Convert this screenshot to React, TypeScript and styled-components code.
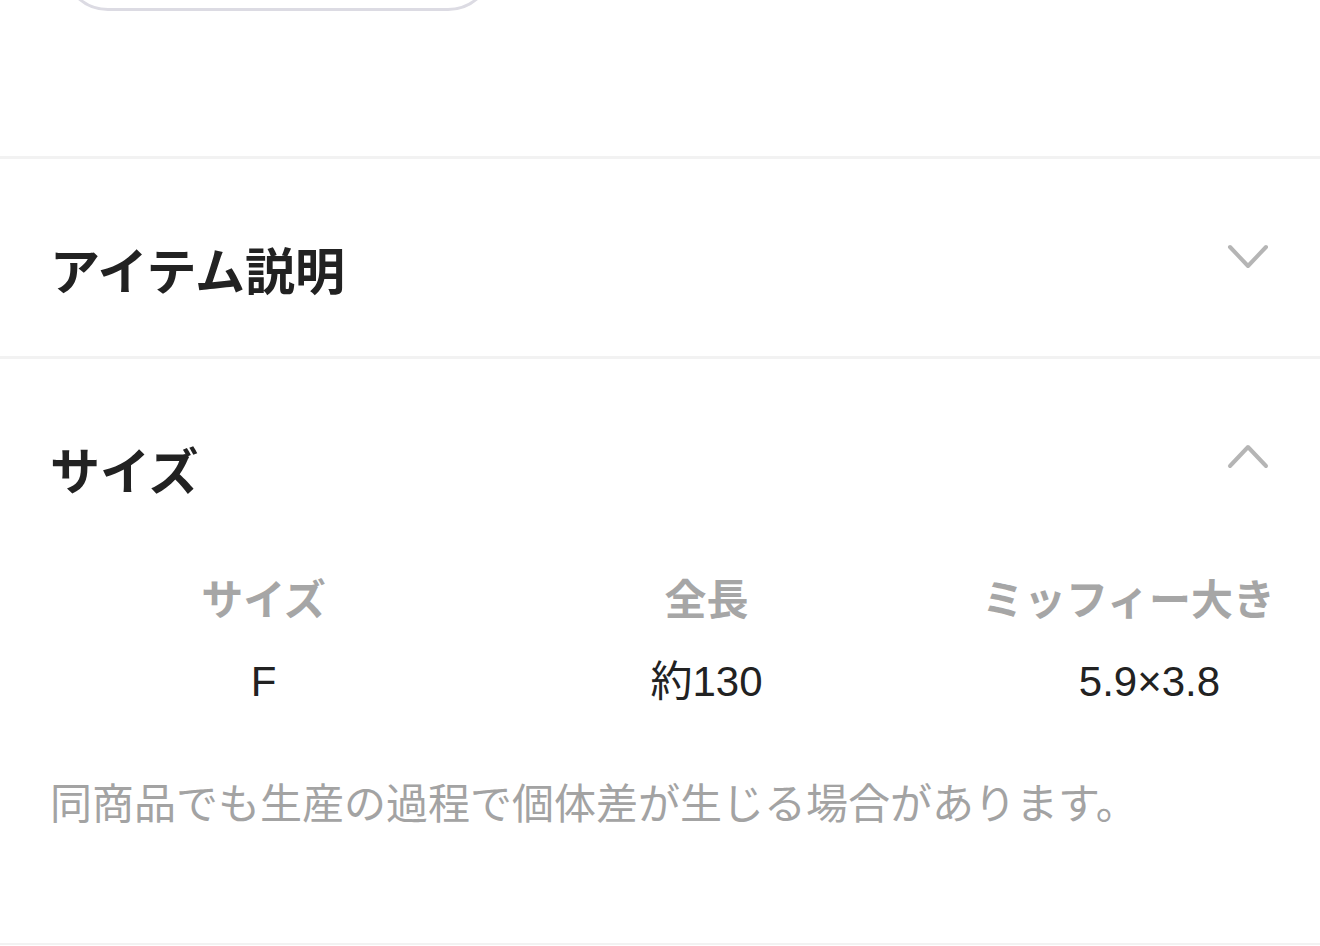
import React from 'react';
import styled, { createGlobalStyle } from 'styled-components';

const GlobalStyle = createGlobalStyle`
  html, body {
    margin: 0;
    padding: 0;
    background: #ffffff;
  }
  body {
    font-family: 'Noto Sans CJK JP', 'Noto Sans', sans-serif;
    color: #222222;
    overflow: hidden;
  }
`;

const Page = styled.div`
  width: 1320px;
  height: 946px;
  overflow: hidden;
`;

const TopArea = styled.div`
  padding: 0 0 145px 62px;
`;

const GhostButton = styled.button`
  display: block;
  width: 432px;
  height: 100px;
  margin-top: -89px;
  border: 3px solid #dcdbe3;
  border-radius: 46px;
  background: #ffffff;
`;

const Divider = styled.div<{ $h?: number }>`
  height: ${(p) => p.$h ?? 3}px;
  background: #f2f2f2;
`;

const Section = styled.section<{ $bottom: number }>`
  padding: 84px 50px ${(p) => p.$bottom}px;
`;

const SectionHead = styled.div`
  display: flex;
  align-items: flex-start;
  justify-content: space-between;
`;

const Title = styled.h2`
  margin: 0;
  font-size: 50px;
  line-height: 50px;
  font-weight: 700;
  color: #222222;
`;

const Chevron = styled.svg`
  display: block;
  width: 44px;
  height: 28px;
  fill: none;
  stroke: #b5b5b5;
  stroke-width: 4;
  stroke-linecap: round;
  stroke-linejoin: round;
`;

const SectionBody = styled.div`
  margin-top: 74px;
`;

const TableScroll = styled.div`
  margin-left: -8px;
  overflow: hidden;
`;

const SizeGrid = styled.div`
  display: grid;
  grid-template-columns: repeat(3, 443px);
  row-gap: 25px;
`;

const Cell = styled.div<{ $head?: boolean }>`
  text-align: center;
  white-space: nowrap;
  font-family: ${(p) =>
    p.$head
      ? "'Noto Sans CJK JP', sans-serif"
      : "'Liberation Sans', 'Noto Sans CJK JP', sans-serif"};
  font-size: 42px;
  line-height: 60px;
  font-weight: ${(p) => (p.$head ? 700 : 400)};
  color: ${(p) => (p.$head ? '#a6a6a6' : '#222222')};
`;

const Note = styled.p`
  margin: 59px 0 0;
  font-size: 42px;
  line-height: 60px;
  color: #a3a3a3;
  white-space: nowrap;
`;

const ChevronIcon = ({ up }: { up?: boolean }) => (
  <Chevron viewBox="0 0 44 28">
    {up ? <path d="M4 23 L22 4 L40 23" /> : <path d="M4 4 L22 23 L40 4" />}
  </Chevron>
);

const heads = ['サイズ', '全長', 'ミッフィー大きさ'];
const values = ['F', '約130', '5.9×3.8'];

export default function App() {
  return (
    <Page>
      <GlobalStyle />
      <TopArea>
        <GhostButton type="button" />
      </TopArea>
      <Divider />
      <Section $bottom={63}>
        <SectionHead>
          <Title>アイテム説明</Title>
          <ChevronIcon />
        </SectionHead>
      </Section>
      <Divider />
      <Section $bottom={112}>
        <SectionHead>
          <Title>サイズ</Title>
          <ChevronIcon up />
        </SectionHead>
        <SectionBody>
          <TableScroll>
            <SizeGrid>
              {heads.map((h) => (
                <Cell key={h} $head>
                  {h}
                </Cell>
              ))}
              {values.map((v) => (
                <Cell key={v}>{v}</Cell>
              ))}
            </SizeGrid>
          </TableScroll>
          <Note>同商品でも生産の過程で個体差が生じる場合があります。</Note>
        </SectionBody>
      </Section>
      <Divider $h={2} />
    </Page>
  );
}
